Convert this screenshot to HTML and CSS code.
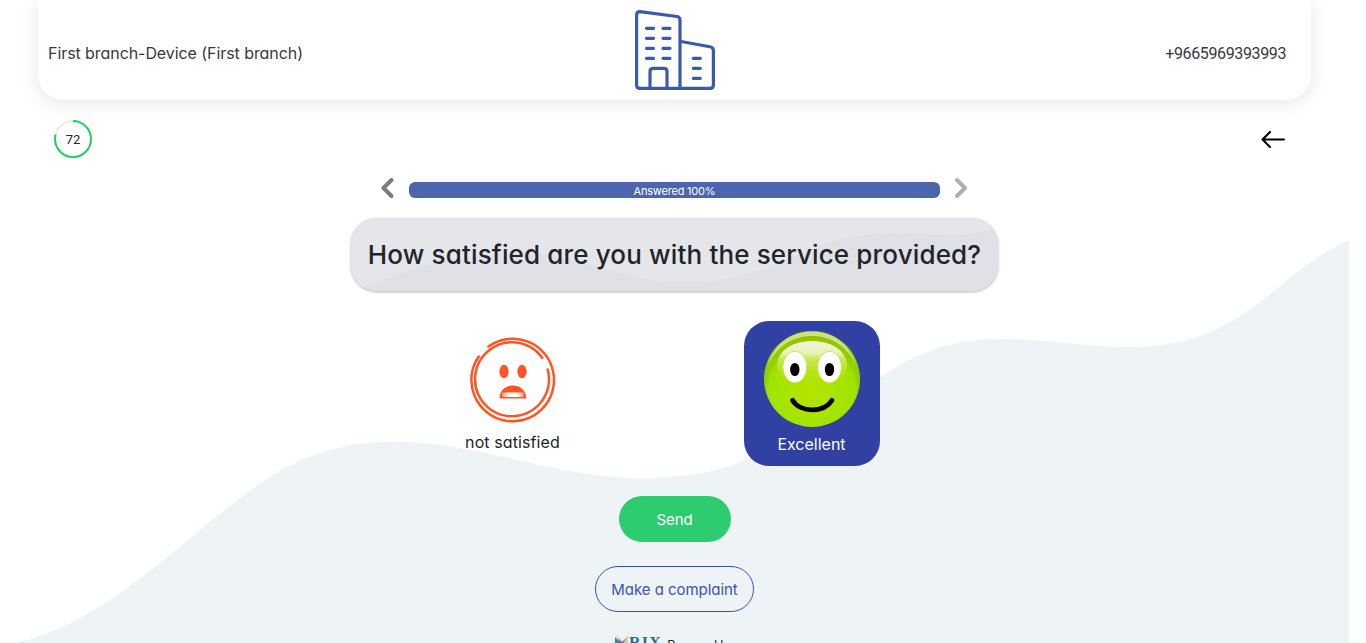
FILE: index.html
```html
<!DOCTYPE html>
<html lang="en">
<head>
<meta charset="utf-8">
<title>Survey</title>
<link rel="stylesheet" href="styles.css">
</head>
<body>
<div class="page">
  <svg class="wave" viewBox="0 0 1349 643" aria-hidden="true">
    <path d="M14 643C100 627 180 542 252 489C300 453 345 442 393 442C485 442 550 478 640 478C690 478 725 471 764 452C811 430 842 402 881 377C918 351 955 339 1000 339C1045 339 1085 347 1128 347C1248 347 1270 275 1349 240V643Z"/>
  </svg>
  <header class="header">
    <div class="branch"><span>First branch-Device (First branch)</span></div>
    <svg class="building" viewBox="0 0 80 80" aria-hidden="true">
      <path d="M5 1.7 42 6.5Q45 7 45 10V78.4H5Q1.6 78.4 1.6 75V5Q1.6 1.7 5 1.7Z"/>
      <path d="M46 31.5 75 36.7Q78.4 37.3 78.4 40.5V75Q78.4 78.4 75 78.4H45M15 78V61.5Q15 58.3 18.2 58.3H29Q32 58.3 32 61.5V78"/>
      <path d="M11.5 18.3h7M28 18.3h7M11.5 28.3h7M28 28.3h7M11.5 38.3h7M28 38.3h7M11.5 48.3h7M28 48.3h7M58.3 48.3h7M58.3 58.3h7M58.3 68.3h7"/>
    </svg>
    <div class="phone"><span>+9665969393993</span></div>
  </header>
  <div class="tools">
    <div class="timer">
      <svg viewBox="0 0 38 38" aria-hidden="true"><circle class="track" cx="19" cy="19" r="18"/><circle class="left" cx="19" cy="19" r="18" pathLength="100" transform="rotate(-90 19 19)"/></svg>
      <span>72</span>
    </div>
    <svg class="back" viewBox="0 0 24 18" aria-hidden="true"><path d="M23 9.5H2M9 2 1.5 9.5 9 17"/></svg>
  </div>
  <main class="survey">
    <div class="steps">
      <svg class="chev prev" viewBox="0 0 14 22" aria-hidden="true"><path d="M10.500 3 2.500 11l8 8"/></svg>
      <div class="bar"><span>Answered 100%</span></div>
      <svg class="chev next" viewBox="0 0 14 22" aria-hidden="true"><path d="M3 3l8 8-8 8"/></svg>
    </div>
    <div class="question">
      <svg class="ripple" viewBox="0 0 647 74" preserveAspectRatio="none" aria-hidden="true"><path d="M0 74C30 68 75 35 175 36C230 37 270 65 332 65C435 65 450 15 546 15C585 15 610 24 647 8V74Z"/></svg>
      <h1>How satisfied are you with the service provided?</h1>
    </div>
    <div class="answers">
      <div class="answer sad">
        <svg viewBox="0 0 86 86" aria-hidden="true">
          <g class="rings"><path d="M18.500 9.500A41.300 41.300 0 1 1 8.700 19.500"/><path d="M72.300 21A37 37 0 1 0 77.700 32.500"/></g>
          <ellipse cx="34" cy="34.500" rx="4.600" ry="6.700"/><ellipse cx="52" cy="34.500" rx="4.600" ry="6.700"/>
          <path d="M29.500 61.500C29.500 44 56.300 44 56.300 61.500Z"/>
          <defs><linearGradient id="teeth"><stop offset="0" stop-color="#ff8860"/><stop offset=".3" stop-color="#fff"/><stop offset=".7" stop-color="#fff"/><stop offset="1" stop-color="#ff8860"/></linearGradient></defs>
          <rect x="32" y="55.500" width="22" height="4.500" fill="url(#teeth)"/>
        </svg>
        <span>not satisfied</span>
      </div>
      <div class="answer happy">
        <svg viewBox="0 0 96 96" aria-hidden="true">
          <defs>
            <radialGradient id="skin" cy=".62"><stop offset="0" stop-color="#b4e500"/><stop offset=".9" stop-color="#a0e400"/><stop offset="1" stop-color="#8ed000"/></radialGradient>
            <linearGradient id="shade" x2="0" y2="1"><stop offset="0" stop-color="#98b900" stop-opacity=".85"/><stop offset=".5" stop-color="#a0d000" stop-opacity="0"/></linearGradient>
            <linearGradient id="gloss" x2="0" y2="1"><stop offset="0" stop-color="#f1f8d8"/><stop offset=".28" stop-color="#e6f3b5"/><stop offset=".42" stop-color="#d6ec74" stop-opacity=".75"/><stop offset="1" stop-color="#c6e800" stop-opacity="0"/></linearGradient>
          </defs>
          <circle cx="48" cy="48" r="48" fill="url(#skin)"/><circle cx="48" cy="48" r="48" fill="url(#shade)"/>
          <path d="M4 35C15-11 81-11 92 35C77-5 19-5 4 35Z" fill="#cfe58a" opacity=".9"/>
          <path d="M13 35C13 1.500 83 1.500 83 35C83 61 13 61 13 35Z" fill="url(#gloss)"/>
          <g class="eyes"><ellipse cx="30.800" cy="36" rx="12" ry="15.800"/><ellipse cx="65.500" cy="36" rx="12" ry="15.800"/></g>
          <ellipse cx="30.800" cy="38.500" rx="4.700" ry="6.600"/><ellipse cx="65.500" cy="38.500" rx="4.700" ry="6.600"/>
          <path class="smile" d="M28.500 69.200C36 82 60 82 68 69.200"/>
        </svg>
        <span>Excellent</span>
      </div>
    </div>
    <button class="send"><span>Send</span></button>
    <button class="complaint"><span>Make a complaint</span></button>
    <footer class="footer">
      <svg class="mark" viewBox="0 0 14 16" aria-hidden="true"><path fill="#f5a58e" d="M0 0 7 7 14 1 7 11Z"/><path fill="#397cb6" d="M0 3 6 9 0 14Z"/><path fill="#a35a91" d="M3 5 7 8 11 5 7 13Z"/><path fill="#b8d8b4" d="M8 9 13 3V14Z"/></svg>
      <b>RIX</b><span>Powered by</span>
    </footer>
  </main>
</div>
</body>
</html>
```
FILE: styles.css
```css
* { box-sizing: border-box; }
html, body { margin: 0; height: 643px; overflow: hidden; background: #fff; }
body { font: 16px/24px Inter, Roboto, sans-serif; font-feature-settings: "cv11"; color: #212529; }
span, h1, b { white-space: nowrap; }
svg { display: block; flex: none; }
.page { position: relative; width: 1349px; height: 643px; overflow: hidden; }
.wave { position: absolute; inset: 0; width: 1349px; height: 643px; fill: #eef3f6; }
.header { position: relative; display: grid; grid-template-columns: 1fr 80px 1fr; align-items: center; height: 100px; margin: 0 38px; padding: 0 25px 0 10px; background: #fff; border-radius: 0 0 25px 25px; box-shadow: 0 3px 20px rgba(0,0,0,.1); color: #373940; }
.branch { letter-spacing: -.07px; padding-top: 6px; }
.building { width: 80px; height: 80px; margin-left: 8px; fill: none; stroke: #3a5aac; stroke-width: 3.2; stroke-linecap: round; }
.phone { text-align: right; padding-top: 7px; font-family: Roboto, sans-serif; letter-spacing: -.37px; }
.tools { position: relative; display: flex; justify-content: space-between; align-items: center; height: 38px; margin: 20px 64px 0 54px; }
.timer { display: grid; width: 38px; height: 38px; place-items: center; font: 13px Roboto, sans-serif; }
.timer > * { grid-area: 1 / 1; }
.timer svg { width: 38px; height: 38px; fill: none; stroke-width: 2; }
.track { stroke: #ececec; }
.left { stroke: #22cf65; stroke-dasharray: 79 21; }
.back { width: 24px; height: 18px; fill: none; stroke: #000; stroke-width: 2; stroke-linecap: round; stroke-linejoin: round; }
.survey { position: relative; display: flex; flex-direction: column; align-items: center; padding-top: 19px; }
.steps { display: flex; align-items: center; gap: 14px; height: 22px; }
.chev { width: 14px; height: 22px; fill: none; stroke: #7c7c7c; stroke-width: 4; stroke-linecap: round; stroke-linejoin: round; }
.next { stroke: #b0b0b0; }
.bar { width: 531px; height: 16px; margin-top: 4px; border-radius: 6px; background: #4b66ae; color: #fff; text-align: center; font-size: 11px; line-height: 18px; letter-spacing: -.2px; }
.question { position: relative; display: flex; align-items: center; justify-content: center; width: 647px; height: 73px; margin-top: 19px; border-radius: 26px; overflow: hidden; background: #e5e6ea; box-shadow: 0 1px 3px rgba(50,50,70,.38); }
.ripple { position: absolute; inset: 0; width: 647px; height: 73px; fill: #e0e1e6; }
h1 { position: relative; margin: 0; font-size: 26px; line-height: 34px; font-weight: 500; letter-spacing: .15px; }
.answers { display: flex; gap: 163px; margin-top: 30px; height: 145px; align-items: flex-start; padding-right: 25px; }
.answer { display: flex; flex-direction: column; align-items: center; width: 136px; height: 145px; }
.sad { padding-top: 16px; fill: #ff5522; letter-spacing: .1px; }
.sad svg { width: 86px; height: 86px; }
.sad span { margin-top: 7px; }
.rings { fill: none; stroke: #ff5522; stroke-width: 2.5; stroke-linecap: round; }
.happy { padding-top: 10px; border-radius: 25px; background: #3040a3; color: #fff; }
.happy svg { width: 96px; height: 96px; }
.happy span { margin-top: 5px; }
.eyes { fill: #fff; stroke: #b8dc28; stroke-width: .7; }
.smile { fill: none; stroke: #000; stroke-width: 4.8; stroke-linecap: round; }
button { font: inherit; font-feature-settings: inherit; height: 46px; border-radius: 23px; padding: 2px 0 0; }
.send { width: 112px; margin-top: 30px; border: 0; background: #2ecc71; color: #fff; font-size: 15px; letter-spacing: -.1px; }
.complaint { width: 159px; margin-top: 24px; border: 1px solid #3a55ad; background: transparent; color: #3a55ad; font-size: 15px; letter-spacing: -.05px; }
.footer { display: flex; align-items: flex-start; width: 119px; margin-top: 22px; height: 24px; }
.mark { width: 14px; height: 16px; }
.footer b { width: 41px; font: bold 16px/18px "Liberation Serif", serif; letter-spacing: 1.2px; color: #2867a5; }
.footer span { font-size: 12.5px; line-height: 24px; letter-spacing: -.3px; }
```
